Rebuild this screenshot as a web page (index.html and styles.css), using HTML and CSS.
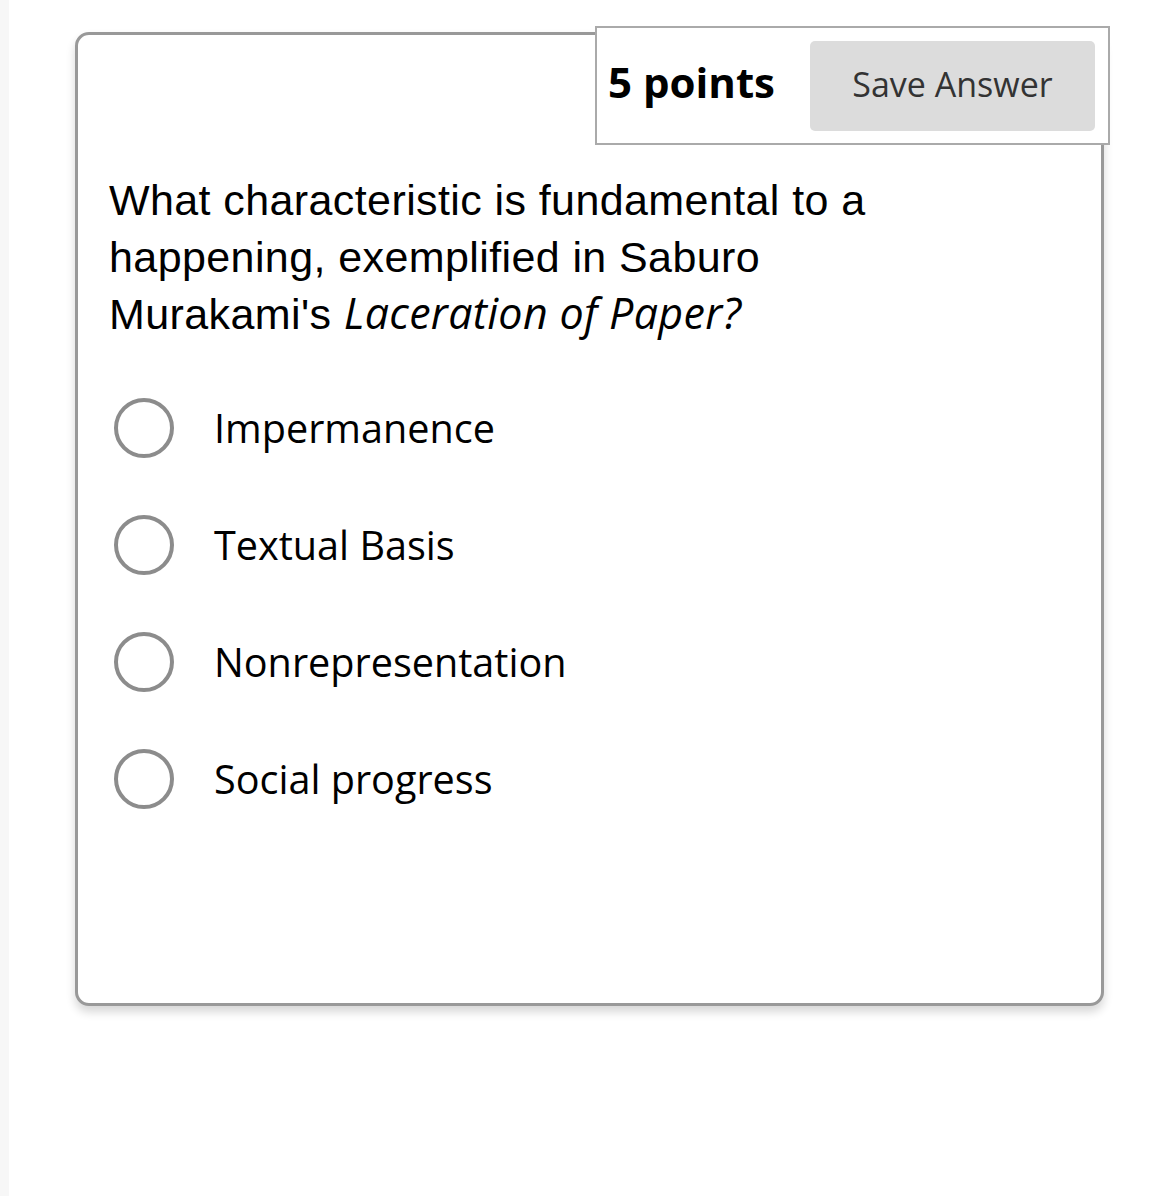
FILE: index.html
```
<!DOCTYPE html>
<html lang="en">
<head>
<meta charset="utf-8">
<title>Question</title>
<link rel="stylesheet" href="styles.css">
</head>
<body>
<div class="page">
  <div class="strip"></div>
  <main class="main">
    <section class="card">
      <div class="header-row">
        <div class="header">
          <span class="points">5 points</span>
          <button class="save" type="button">Save Answer</button>
        </div>
      </div>
      <div class="body">
        <p class="question">What characteristic is fundamental to a happening, exemplified in Saburo Murakami's <em>Laceration of Paper?</em></p>
        <ul class="options">
          <li class="option"><span class="radio"></span><span class="label">Impermanence</span></li>
          <li class="option"><span class="radio"></span><span class="label">Textual Basis</span></li>
          <li class="option"><span class="radio"></span><span class="label">Nonrepresentation</span></li>
          <li class="option"><span class="radio"></span><span class="label">Social progress</span></li>
        </ul>
      </div>
    </section>
  </main>
</div>
</body>
</html>
```
FILE: styles.css
```
html, body {
  margin: 0;
  padding: 0;
  background: #ffffff;
}

.page {
  display: flex;
  min-height: 1196px;
}

.strip {
  width: 9px;
  background: #f7f7f7;
  flex: none;
}

.main {
  padding: 32px 0 0 66px;
}

.card {
  box-sizing: border-box;
  width: 1029px;
  height: 974px;
  border: 3px solid #999999;
  border-radius: 14px;
  background: #ffffff;
  box-shadow: 0 6px 10px rgba(0, 0, 0, 0.16);
}

.header-row {
  display: flex;
  justify-content: flex-end;
  margin: -9px -9px 0 0;
}

.header {
  display: flex;
  align-items: center;
  gap: 35px;
  padding: 13px 13px 12px 11px;
  border: 2px solid #aaaaaa;
  background: #ffffff;
}

.points {
  font-family: "Open Sans", "Liberation Sans", sans-serif;
  font-weight: 700;
  font-size: 42px;
  color: #000000;
  line-height: 1;
  margin-bottom: 9px;
}

.save {
  width: 285px;
  height: 90px;
  border: none;
  border-radius: 5px;
  background: #dcdcdc;
  color: #333333;
  font-family: "Open Sans", "Liberation Sans", sans-serif;
  font-size: 34px;
  padding: 0 0 5px;
}

.body {
  padding: 0 31px;
}

.question {
  max-width: 800px;
  margin: 27px 0 0;
  font-family: "Liberation Sans", Arial, sans-serif;
  font-size: 43px;
  letter-spacing: 0.4px;
  line-height: 57px;
  color: #000000;
}

.question em {
  font-family: "Open Sans", "Liberation Sans", sans-serif;
  font-style: italic;
  font-size: 43px;
  line-height: 1;
  letter-spacing: 0.3px;
}

.options {
  list-style: none;
  margin: 26px 0 0;
  padding: 0;
}

.option {
  display: flex;
  align-items: center;
  height: 117px;
}

.radio {
  box-sizing: border-box;
  width: 60px;
  height: 60px;
  margin-left: 5px;
  border: 4px solid #8c8c8c;
  border-radius: 50%;
  flex: none;
}

.label {
  margin-left: 40px;
  font-family: "Open Sans", "Liberation Sans", sans-serif;
  font-size: 39.6px;
  color: #000000;
}
```
